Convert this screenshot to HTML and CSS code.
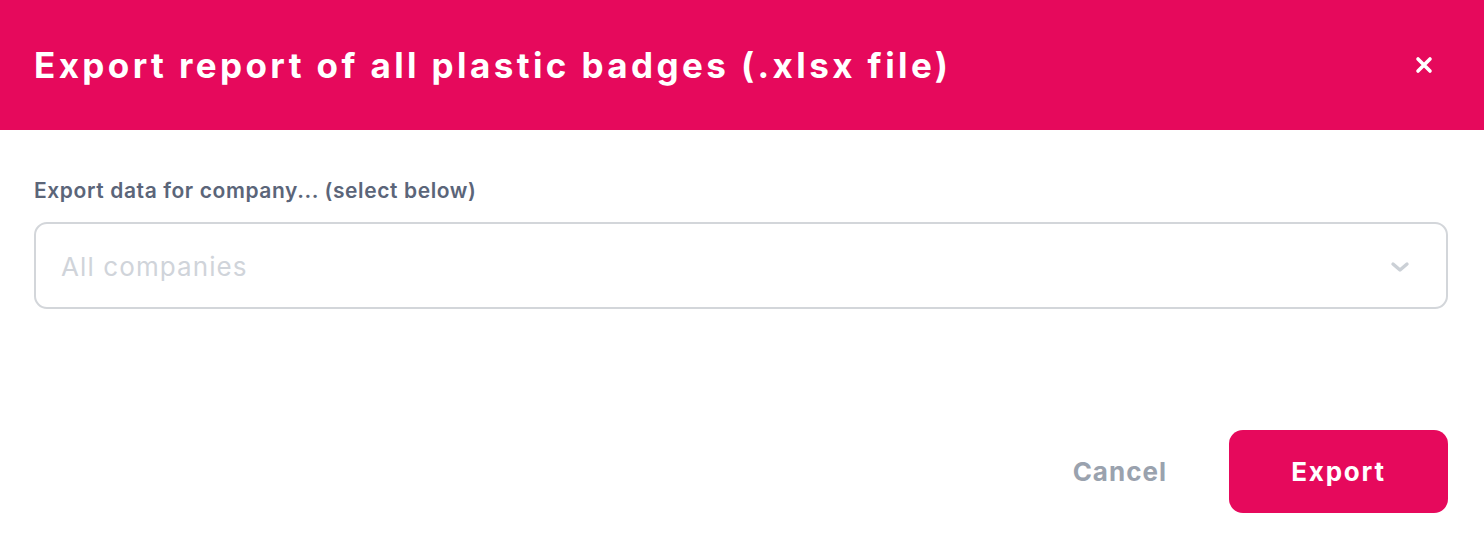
FILE: index.html
```html
<!DOCTYPE html>
<html lang="en">
<head>
    <meta charset="UTF-8">
    <title>Export report</title>
    <link rel="stylesheet" href="styles.css">
</head>
<body>
    <div class="modal">
        <div class="modal-header">
            <h1>Export report of all plastic badges (.xlsx file)</h1>
            <button class="close-btn" aria-label="Close">
                <svg width="18" height="18" viewBox="0 0 18 18">
                    <path d="M3 3 L15 15 M15 3 L3 15" stroke="#fff" stroke-width="3.6" stroke-linecap="round"/>
                </svg>
            </button>
        </div>

        <div class="modal-body">
            <label for="company">Export data for company... (select below)</label>
            <div class="select-box" id="company">
                <span class="placeholder">All companies</span>
                <svg class="chevron" width="20" height="14" viewBox="0 0 20 14">
                    <path d="M3 4 L10 10 L17 4" fill="none" stroke="#cbd0d6" stroke-width="3.4" stroke-linecap="round" stroke-linejoin="round"/>
                </svg>
            </div>
        </div>

        <div class="modal-footer">
            <button class="cancel-btn">Cancel</button>
            <button class="export-btn">Export</button>
        </div>
    </div>
</body>
</html>
```

FILE: styles.css
```css
body {
    margin: 0;
    font-family: "Inter", "Noto Sans", sans-serif;
    background: #fff;
}
.modal {
    width: 1484px;
    height: 550px;
    background: #fff;
}
.modal-header {
    background-color: #e6095c;
    height: 130px;
    display: flex;
    align-items: center;
    justify-content: space-between;
    padding: 0 34px;
    box-sizing: border-box;
}
.modal-header h1 {
    margin: 0;
    color: #fff;
    font-size: 35px;
    font-weight: 700;
    letter-spacing: 3.4px;
}
.close-btn {
    background: none;
    border: none;
    padding: 0;
    margin-right: 17px;
    display: flex;
    cursor: pointer;
}
.modal-body {
    padding: 48px 36px 0 34px;
}
.modal-body label {
    display: block;
    color: #5b6579;
    font-size: 21px;
    font-weight: 600;
    letter-spacing: 0.6px;
    margin-bottom: 19px;
}
.select-box {
    height: 87px;
    border: 2px solid #d3d6da;
    border-radius: 13px;
    box-sizing: border-box;
    display: flex;
    align-items: center;
    justify-content: space-between;
    padding: 2px 36px 0 25px;
}
.placeholder {
    color: #d0d4da;
    font-size: 26px;
    letter-spacing: 1.1px;
}
.modal-footer {
    display: flex;
    justify-content: flex-end;
    align-items: center;
    gap: 62px;
    padding: 121px 36px 0 0;
}
.cancel-btn {
    background: none;
    border: none;
    color: #9aa2ae;
    font-family: inherit;
    font-size: 26px;
    font-weight: 700;
    letter-spacing: 1px;
    cursor: pointer;
    padding: 0;
}
.export-btn {
    background-color: #e6095c;
    color: #fff;
    border: none;
    border-radius: 14px;
    width: 219px;
    height: 83px;
    font-family: inherit;
    font-size: 26px;
    font-weight: 700;
    letter-spacing: 1.8px;
    cursor: pointer;
}
```
